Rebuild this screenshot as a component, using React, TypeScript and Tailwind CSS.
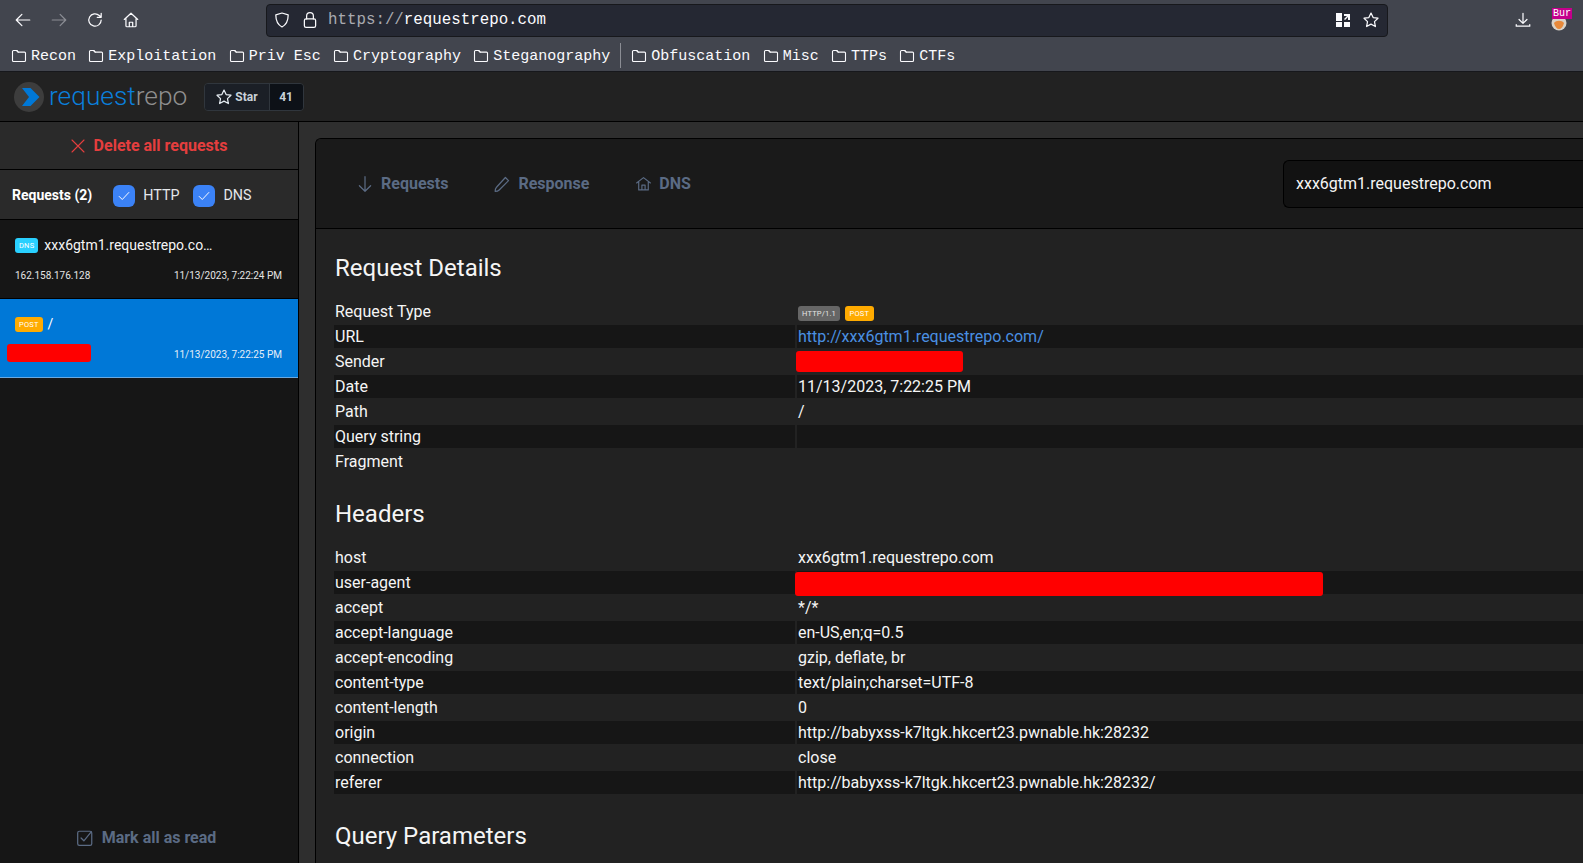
import type { ReactNode } from "react"

const folders = ["Recon", "Exploitation", "Priv Esc", "Cryptography", "Steganography"]
const folders2 = ["Obfuscation", "Misc", "TTPs", "CTFs"]

const details: [string, ReactNode][] = [
  ["Request Type", <RequestTypeBadges />],
  ["URL", <a href="#" className="text-[#4a90e2]">http://xxx6gtm1.requestrepo.com/</a>],
  ["Sender", <div className="-my-px -ml-0.5 h-[21px] w-[167px] rounded-[3px] bg-[#ff0000]" />],
  ["Date", "11/13/2023, 7:22:25 PM"],
  ["Path", "/"],
  ["Query string", ""],
  ["Fragment", ""],
]

const headers: [string, ReactNode][] = [
  ["host", "xxx6gtm1.requestrepo.com"],
  ["user-agent", <div className="-mb-[3px] -ml-[3px] h-[24px] w-[528px] rounded-[3px] bg-[#ff0000]" />],
  ["accept", "*/*"],
  ["accept-language", "en-US,en;q=0.5"],
  ["accept-encoding", "gzip, deflate, br"],
  ["content-type", "text/plain;charset=UTF-8"],
  ["content-length", "0"],
  ["origin", "http://babyxss-k7ltgk.hkcert23.pwnable.hk:28232"],
  ["connection", "close"],
  ["referer", "http://babyxss-k7ltgk.hkcert23.pwnable.hk:28232/"],
]

function RequestTypeBadges() {
  return (
    <div className="flex items-center gap-[5px] pt-[3px]">
      <span className="flex h-[15px] items-center rounded-[3px] bg-[#666] px-1 text-[7.5px] tracking-wide text-[#e5e5e5]">HTTP/1.1</span>
      <span className="flex h-[15px] items-center rounded-[3px] bg-[#ffab00] px-[4.500px] text-[7.5px] tracking-wide text-white">POST</span>
    </div>
  )
}

function Icon({ children, size = 20, className = "" }: { children: ReactNode; size?: number; className?: string }) {
  return (
    <svg width={size} height={size} viewBox="0 0 16 16" fill="none" stroke="currentColor" strokeWidth={1.1} strokeLinecap="round" strokeLinejoin="round" className={`shrink-0 ${className}`}>
      {children}
    </svg>
  )
}

function FolderIcon() {
  return (
    <Icon size={16}>
      <path d="M1.5 3.5a1 1 0 0 1 1-1h3.2l1.5 1.6h6.3a1 1 0 0 1 1 1v7.4a1 1 0 0 1-1 1h-11a1 1 0 0 1-1-1z" />
      <path d="M5.7 2.5 7.2 4.1" />
    </Icon>
  )
}

function Bookmark({ name }: { name: string }) {
  return (
    <div className="flex items-center gap-1">
      <FolderIcon />
      <span className="pt-[3px]">{name}</span>
    </div>
  )
}

function BrowserChrome() {
  return (
    <div className="h-[72px] shrink-0 border-b border-[#17181c] bg-[#42454e] text-[#fbfbfe]" style={{ fontFamily: '"Liberation Mono", monospace' }}>
      <div className="flex h-[40px] items-center">
        <div className="flex w-[266px] items-center pl-[14px]">
          <Icon size={18}><path d="M14 8H2M7 3 2 8l5 5" /></Icon>
          <Icon size={18} className="ml-[18px] text-[#8b8d94]"><path d="M2 8h12M9 3l5 5-5 5" /></Icon>
          <Icon size={18} className="ml-[18px]"><path d="M13.5 8a5.5 5.5 0 1 1-1.7-4L13.5 5.6M13.5 2v3.6H10" /></Icon>
          <Icon size={18} className="ml-[18px]"><path d="M2 7.5 8 2l6 5.5M3.5 6.5V13a1 1 0 0 0 1 1h7a1 1 0 0 0 1-1V6.500M6.500 14v-4h3v4" /></Icon>
        </div>
        <div className="flex h-[33px] w-[1122px] items-center rounded-[4px] border border-[#17181c] bg-[#252833] pl-[6px] pr-[7px]">
          <Icon size={18}><path d="M8 1.800 13.500 3.500c0 5-1.500 8.500-5.500 10.700C4 12 2.500 8.500 2.500 3.500z" /></Icon>
          <Icon size={18} className="ml-[10px]"><rect x="3" y="7" width="10" height="7.500" rx="1.500" /><path d="M5 7V4.500a3 3 0 0 1 6 0V7" /></Icon>
          <div className="ml-[9px] pt-[2px] text-[15.8px] leading-none">
            <span className="text-[#a9aab0]">https://</span>requestrepo.com
          </div>
          <div className="ml-auto flex items-center gap-[11px]">
            <svg width="16" height="16" viewBox="0 0 16 16" fill="#fbfbfe">
              <rect x="1" y="1" width="6" height="8" />
              <rect x="1" y="10" width="6" height="5" />
              <rect x="9" y="10" width="6" height="5" />
              <path d="M9 2h6v6h-2V5l-3 3-1-1 3-3H9z" />
            </svg>
            <Icon size={18}><path d="m8 1.800 1.900 4 4.300.6-3.100 3 .8 4.400L8 11.700l-3.900 2.100.8-4.400-3.100-3 4.300-.6z" /></Icon>
          </div>
        </div>
        <div className="ml-auto flex items-center pr-[14px]">
          <Icon size={18} className="mr-[19px]"><path d="M8 2v8.500M4.500 7.500 8 11l3.500-3.500M2 12v1.500h12V12" /></Icon>
          <div className="relative h-[22px] w-[18px]">
            <svg width="16" height="16" viewBox="0 0 16 16" className="absolute bottom-0 left-0">
              <circle cx="8" cy="8" r="7.500" fill="#d9d2c7" />
              <path d="M3 8c2-3 8-3 10 0-1 4-3 6-5 6s-4-2-5-6z" fill="#e8893a" />
            </svg>
            <span className="absolute -right-[3px] -top-[1px] bg-[#c4008c] px-px text-[10px] leading-[11px] text-white">Bur</span>
          </div>
        </div>
      </div>
      <div className="flex h-[31px] items-center pl-[11px] text-[15px]">
        <div className="flex items-center gap-[12.300px]">
          {folders.map((f) => (
            <Bookmark key={f} name={f} />
          ))}
        </div>
        <div className="mx-[10px] h-[25px] w-px bg-[#8b8d94]" />
        <div className="flex items-center gap-[12.300px]">
          {folders2.map((f) => (
            <Bookmark key={f} name={f} />
          ))}
        </div>
      </div>
    </div>
  )
}

function AppHeader() {
  return (
    <div className="flex h-[50px] shrink-0 items-center border-b border-black bg-[#222222] pl-[14px]">
      <svg width="30" height="30" viewBox="0 0 30 30" className="shrink-0">
        <circle cx="15" cy="15" r="15" fill="#3d3d3d" />
        <path d="M8 6h8.500l9 9-9 9H8l7-9z" fill="#0078d7" />
      </svg>
      <div className="ml-[5px] text-[26.300px] font-light leading-none">
        <span className="text-[#0a7fdc]">request</span>
        <span className="text-[#8f8f8f]">repo</span>
      </div>
      <div className="ml-[17px] flex h-[28px] overflow-hidden rounded-[4px] border border-[#30363d] text-[12px] font-bold text-[#c9d1d9]">
        <div className="flex items-center gap-[2px] border-r border-[#30363d] bg-[#1b1f26] pl-[10px] pr-[11px]">
          <Icon size={18} className="text-[#e6edf3]"><path d="m8 1.800 1.900 4 4.300.6-3.100 3 .8 4.400L8 11.700l-3.900 2.100.8-4.400-3.100-3 4.300-.6z" /></Icon>
          Star
        </div>
        <div className="flex w-[33px] items-center justify-center bg-[#0d1117]">41</div>
      </div>
    </div>
  )
}

function CheckBox({ label }: { label: string }) {
  return (
    <label className="flex items-center gap-2">
      <span className="flex h-[22px] w-[22px] items-center justify-center rounded-[6px] bg-[#3b82f6] text-white">
        <Icon size={14}><path d="m2.500 8.500 3.500 3.500 7.500-8" /></Icon>
      </span>
      <span className="text-[14.300px] text-[#e5e7eb]">{label}</span>
    </label>
  )
}

function Sidebar() {
  return (
    <div className="flex w-[299px] shrink-0 flex-col border-r border-black bg-[#161616]">
      <div className="flex h-[48px] shrink-0 items-center justify-center gap-2 border-b border-black bg-[#2a2a2a] pr-[1px] text-[16px] font-bold text-[#e53e3e]">
        <Icon size={16}><path d="m2 2 12 12M14 2 2 14" /></Icon>
        Delete all requests
      </div>
      <div className="flex h-[50px] shrink-0 items-center border-b border-black bg-[#2a2a2a] pl-[12px] pt-[2px]">
        <span className="text-[14px] font-bold text-white">Requests (2)</span>
        <div className="ml-[21px] flex items-center gap-[14px]">
          <CheckBox label="HTTP" />
          <CheckBox label="DNS" />
        </div>
      </div>
      <div className="flex h-[79px] shrink-0 flex-col border-b border-black pl-[15px] pr-[16px] pt-[18px]">
        <div className="flex items-center gap-[6px]">
          <span className="flex h-[15px] items-center rounded-[3px] bg-[#29d0ff] px-1 text-[7.500px] tracking-wide text-white">DNS</span>
          <span className="w-[170px] truncate text-[14px] leading-[15px] text-[#f5f5f5]">xxx6gtm1.requestrepo.com</span>
        </div>
        <div className="mt-[16px] flex items-center justify-between text-[10px] leading-[14px] text-[#e5e5e5]">
          <span>162.158.176.128</span>
          <span>11/13/2023, 7:22:24 PM</span>
        </div>
      </div>
      <div className="flex h-[79px] shrink-0 flex-col border-b border-[#6aa9e0] bg-[#0078d7] pl-[15px] pr-[16px] pt-[18px]">
        <div className="flex items-center gap-[5px]">
          <span className="flex h-[15px] items-center rounded-[3px] bg-[#ffab00] px-[4px] text-[7.500px] tracking-wide text-white">POST</span>
          <span className="text-[14px] leading-[15px] text-white">/</span>
        </div>
        <div className="mt-[12px] flex items-center justify-between text-[10px] leading-[14px] text-[#e5eef7]">
          <div className="-ml-2 h-[18px] w-[84px] rounded-[3px] bg-[#ff0000]" />
          <span className="mt-[4px]">11/13/2023, 7:22:25 PM</span>
        </div>
      </div>
      <div className="mt-auto flex items-center justify-center gap-2 pb-[13px] pr-[6px] text-[16px] font-bold text-[#5b6b84]">
        <Icon size={18}><rect x="1.500" y="2" width="12.500" height="12.500" rx="1.500" /><path d="m4.500 8 2.500 2.500 6.500-8" /></Icon>
        Mark all as read
      </div>
    </div>
  )
}

function Tab({ icon, label }: { icon: ReactNode; label: string }) {
  return (
    <div className="flex items-center gap-[7px] text-[16px] font-bold text-[#5b6b84]">
      {icon}
      {label}
    </div>
  )
}

function KeyValueTable({ rows }: { rows: [string, ReactNode][] }) {
  return (
    <table className="-ml-[3px] w-[1262px] table-fixed border-separate border-spacing-[2px] text-[16px] leading-[21px] text-[#f5f5f5]">
      <tbody>
        {rows.map(([key, value], i) => (
          <tr key={key} className={i % 2 === 1 ? "bg-[#161616]" : ""}>
            <td className="w-[461px] h-[23px] p-px">{key}</td>
            <td className="h-[23px] p-px">{value}</td>
          </tr>
        ))}
      </tbody>
    </table>
  )
}

function MainPanel() {
  return (
    <div className="min-w-0 flex-1 overflow-hidden bg-[#2e2e2e] pl-4 pt-4">
      <div className="h-full overflow-hidden rounded-tl-[6px] border-l border-t border-black bg-[#222222]">
        <div className="flex h-[90px] items-center border-b border-black bg-[#1a1a1a] pl-[40px]">
          <Tab icon={<Icon size={18}><path d="M8 1.500V14.500M3 9.500l5 5 5-5" /></Icon>} label="Requests" />
          <div className="w-[45px]" />
          <Tab icon={<Icon size={18}><path d="M11 2.200 13.800 5 5.500 13.300c-1 1-2.300 1.200-3.600 1.200 0-1.300.2-2.600 1.200-3.600z" /></Icon>} label="Response" />
          <div className="w-[46px]" />
          <Tab icon={<Icon size={17}><path d="M1.500 7.500 8 2.500l6.500 5M3.500 6.500v7.500h9V6.500M6.500 14V9.500h3V14" /></Icon>} label="DNS" />
          <div className="ml-auto flex h-[48px] w-[300px] items-center rounded-l-[6px] border border-r-0 border-black bg-[#121212] pl-[12px] text-[16px] text-[#f5f5f5]">
            xxx6gtm1.requestrepo.com
          </div>
        </div>
        <div className="px-[19px] pt-[23px]">
          <h2 className="mb-[14px] text-[24px] leading-8 text-[#f5f5f5]">Request Details</h2>
          <KeyValueTable rows={details} />
          <h2 className="mb-[14px] mt-[23px] text-[24px] leading-8 text-[#f5f5f5]">Headers</h2>
          <KeyValueTable rows={headers} />
          <h2 className="mt-[24px] text-[24px] leading-8 text-[#f5f5f5]">Query Parameters</h2>
        </div>
      </div>
    </div>
  )
}

export default function App() {
  return (
    <div className="flex h-[863px] flex-col overflow-hidden bg-[#222222]" style={{ fontFamily: 'Roboto, sans-serif' }}>
      <BrowserChrome />
      <AppHeader />
      <div className="flex min-h-0 flex-1">
        <Sidebar />
        <MainPanel />
      </div>
    </div>
  )
}
